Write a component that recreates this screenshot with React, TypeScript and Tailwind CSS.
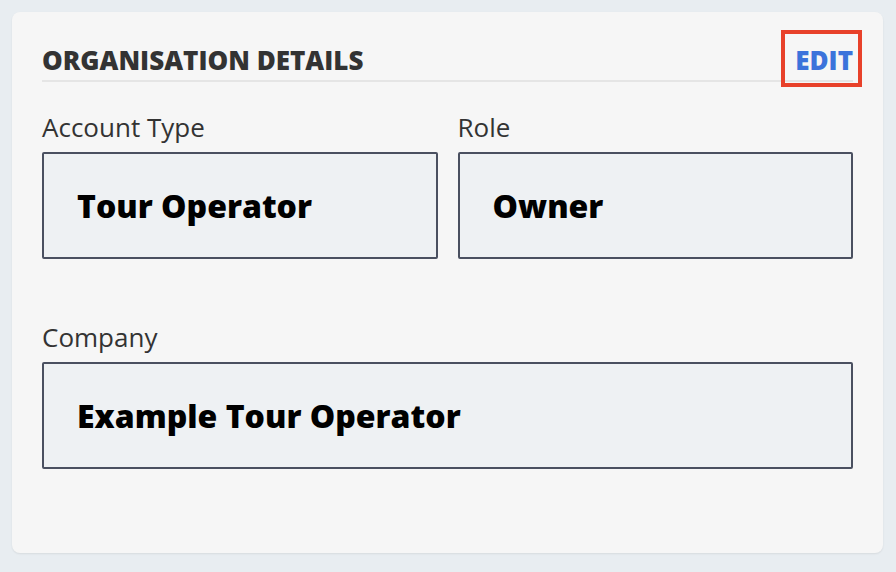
import React from "react";

type FieldProps = {
  label: string;
  value: string;
};

const Field = ({ label, value }: FieldProps) => {
  return (
    <div className="flex flex-col">
      <label className="text-[26px] leading-[36px] text-[#333333]">{label}</label>
      <div className="mt-[7px] flex h-[107px] items-center rounded-[2px] border-2 border-[#4a5060] bg-[#eef1f3] px-[33px]">
        <span className="text-[32px] font-extrabold leading-[32px] text-black">{value}</span>
      </div>
    </div>
  );
};

const App = () => {
  return (
    <div
      className="h-[572px] w-[896px] bg-[#e8edf1] p-3"
      style={{ fontFamily: '"Open Sans", "Noto Sans", sans-serif' }}
    >
      <div className="h-[541px] w-[871px] rounded-lg bg-[#f6f6f6] px-[30px] pt-[30px] shadow-[0_1px_2px_rgba(0,0,0,0.08)]">
        <div className="flex items-end justify-between border-b-2 border-[#e5e5e5] pb-[2px]">
          <h2 className="text-[26px] font-extrabold uppercase leading-[36px] text-[#333333]">
            Organisation Details
          </h2>
          <button className="relative text-[26px] font-extrabold uppercase leading-[36px] text-[#3b73db]">
            Edit
            <span className="pointer-events-none absolute -left-[14px] -right-[9px] -top-[12px] -bottom-[9px] border-4 border-[#e8412a]" />
          </button>
        </div>

        <div className="mt-[27px] grid grid-cols-2 gap-x-[20px]">
          <Field label="Account Type" value="Tour Operator" />
          <Field label="Role" value="Owner" />
        </div>

        <div className="mt-[60px]">
          <Field label="Company" value="Example Tour Operator" />
        </div>
      </div>
    </div>
  );
};

export default App;
